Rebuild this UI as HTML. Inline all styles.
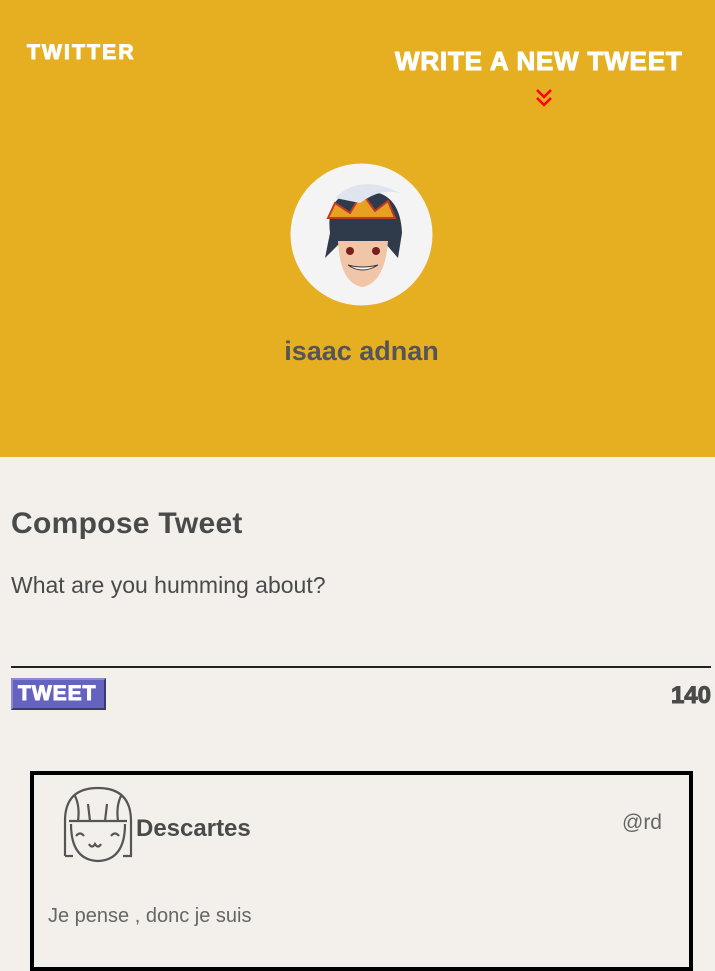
<!DOCTYPE html>
<html><head><style>
*{margin:0;padding:0;box-sizing:border-box}
body{width:715px;height:931px;overflow:hidden;background:#f3f0ec;font-family:"Liberation Sans",sans-serif;color:#4a4a4a;position:relative}
.hdr{position:absolute;left:0;top:0;width:715px;height:457px;background:#e5af21}
.disp{position:absolute;font-family:"Liberation Sans",sans-serif;font-weight:bold;text-transform:uppercase;color:#fff;white-space:nowrap;-webkit-text-stroke:1px #fff}
.abs{position:absolute;white-space:nowrap}
</style></head><body>
<div class="hdr"></div>
<div class="disp" style="left:27px;top:41px;font-size:21px;letter-spacing:2.2px">TWITTER</div>
<div class="disp" style="left:395px;top:46px;font-size:26px;letter-spacing:0.8px">WRITE A NEW TWEET</div>
<svg class="abs" style="left:535px;top:88px" width="18" height="22" viewBox="0 0 18 22"><path d="M2 2l7 7 7-7M2 10l7 7 7-7" stroke="#f00" stroke-width="2.5" fill="none"/></svg>
<svg class="abs" style="left:290px;top:163px" width="143" height="143" viewBox="0 0 143 143">
<circle cx="71.5" cy="71.5" r="71" fill="#f4f4f4"/>
<path d="M40 70 Q35 30 70 28 Q110 25 112 70 L108 95 L95 80 L50 80 L35 95Z" fill="#2f3a4a"/>
<path d="M48 78 Q50 120 72 124 Q95 120 98 78Z" fill="#f1c5a8"/>
<path d="M58 102 Q72 112 88 102 Q72 106 58 102Z" fill="#fff" stroke="#333"/>
<path d="M38 55 L45 40 L60 50 L72 30 L85 48 L98 38 L105 55Z" fill="#e8a020" stroke="#c0392b" stroke-width="2"/>
<path d="M45 35 Q70 10 110 30 Q90 25 70 40Z" fill="#dfe4ee"/>
<circle cx="60" cy="88" r="4" fill="#7a1e1e"/><circle cx="86" cy="88" r="4" fill="#7a1e1e"/>
</svg>
<div class="abs" style="left:0;width:723px;text-align:center;top:336px;font-size:27px;font-weight:bold;color:#555">isaac adnan</div>
<div class="abs" style="left:11px;top:507px;font-size:30px;font-weight:bold;color:#4a4a4a;letter-spacing:0.3px">Compose Tweet</div>
<div class="abs" style="left:11px;top:572px;font-size:23px;color:#4a4a4a">What are you humming about?</div>
<div class="abs" style="left:11px;top:666px;width:700px;height:2px;background:#222"></div>
<div class="abs" style="left:11px;top:678px;width:95px;height:32px;background:#6563c0;border:2px solid #3c3c6a;border-top-color:#8a8ad0;border-left-color:#8a8ad0"></div>
<div class="disp" style="left:18px;top:682px;font-size:21px;letter-spacing:1px">TWEET</div>
<div class="abs" style="right:4px;top:682px;font-size:24px;font-weight:bold;color:#4a4a4a;-webkit-text-stroke:1px #4a4a4a">140</div>
<div class="abs" style="left:30px;top:771px;width:663px;height:200px;border:4px solid #000"></div>
<svg class="abs" style="left:63px;top:786px" width="70" height="78" viewBox="0 0 70 78">
<g fill="none" stroke="#555" stroke-width="2.2">
<path d="M2 70 L2 35 Q2 2 35 2 Q68 2 68 35 L68 70 L60 70"/>
<path d="M10 70 L2 70"/>
<path d="M6 35 L64 35"/>
<path d="M8 38 Q8 74 35 75 Q62 74 62 38"/>
<path d="M15 35 Q17 20 12 10M27 35 L25 18M42 35 L44 18M55 35 Q53 20 58 10"/>
<path d="M13 50 Q17 45 21 50M48 50 Q52 45 56 50M26 58 Q29 63 32 58 Q35 63 38 58"/>
</g></svg>
<div class="abs" style="left:136px;top:815px;font-size:24px;font-weight:bold;color:#4a4a4a">Descartes</div>
<div class="abs" style="right:53px;top:811px;font-size:21px;color:#666">@rd</div>
<div class="abs" style="left:48px;top:905px;font-size:20px;color:#666">Je pense , donc je suis</div>
</body></html>
